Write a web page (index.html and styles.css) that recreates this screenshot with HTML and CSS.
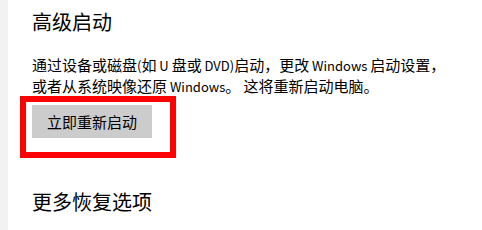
FILE: index.html
```html
<!DOCTYPE html>
<html lang="zh-CN">
<head>
    <meta charset="UTF-8">
    <title>恢复</title>
    <link rel="stylesheet" href="styles.css">
</head>
<body>
    <div class="page">
        <div class="strip"></div>
        <div class="main">
            <h2>高级启动</h2>
            <p class="desc">通过设备或磁盘<span class="en">(</span>如<span class="en"> U </span>盘或<span class="en"> DVD)</span>启动，更改<span class="en"> Windows </span>启动设置，<br>或者从系统映像还原<span class="en"> Windows</span>。 这将重新启动电脑。</p>
            <!-- 红框标注 -->
            <div class="highlight">
                <button type="button">立即重新启动</button>
            </div>
            <h2 class="more">更多恢复选项</h2>
        </div>
    </div>
</body>
</html>
```

FILE: styles.css
```css
body {
    margin: 0;
    background-color: #fff;
    font-family: "Noto Sans CJK SC", "Noto Sans", sans-serif;
    color: #000;
}
.page {
    display: flex;
    height: 230px;
    overflow: hidden;
}
.strip {
    width: 8px;
    background-color: #f2f2f2;
}
.main {
    padding-left: 24px;
}
h2 {
    font-size: 20px;
    font-weight: normal;
    line-height: 28px;
    margin: 8px 0 0;
}
.desc {
    font-size: 15px;
    line-height: 20px;
    margin: 19px 0 0;
    white-space: nowrap;
}
.desc .en {
    font-size: 13px;
}
.highlight {
    width: fit-content;
    margin: -1px 0 0 -12px;
    border: 6px solid #ff0000;
    padding: 3px 18px 14px 6px;
}
button {
    display: block;
    width: 120px;
    height: 33px;
    border: none;
    background-color: #cccccc;
    font-family: inherit;
    font-size: 15px;
    color: #000;
    padding: 0;
}
h2.more {
    margin-top: 30px;
}
```
